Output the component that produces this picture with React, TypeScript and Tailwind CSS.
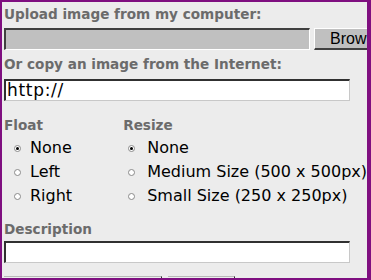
const heading = "h-[14px] font-['DejaVu_Sans',sans-serif] text-[13.6px] font-bold leading-none whitespace-nowrap text-[#6b6b6b]"
const label = "font-['DejaVu_Sans',sans-serif] text-[16px] leading-none whitespace-nowrap text-black"
const field = "border-t-2 border-l-2 border-b border-r border-t-[#303030] border-l-[#303030] border-b-[#c8c8c8] border-r-[#c8c8c8] bg-white"

function Radio({ checked }: { checked?: boolean }) {
  return (
    <span className="flex h-[7px] w-[7px] shrink-0 items-center justify-center rounded-full border border-[#8a8a8a] bg-white">
      {checked && <span className="h-[3px] w-[3px] rounded-full bg-black" />}
    </span>
  )
}

function Option({ text, checked, wide }: { text: string; checked?: boolean; wide?: boolean }) {
  return (
    <div className={wide ? "flex h-6 items-center gap-[12px] pl-[5px]" : "flex h-6 items-center gap-[9px] pl-[10px]"}>
      <Radio checked={checked} />
      <span className={label}>{text}</span>
    </div>
  )
}

export default function App() {
  return (
    <div className="h-[280px] w-[371px] overflow-hidden border-t-2 border-b-2 border-l-2 border-r-4 border-[#7f0f80] bg-[#ececec]">
      <div className="flex flex-col pl-[2px] pt-[6px]">
        <div className={heading}>Upload image from my computer:</div>
        <div className="mt-[6px] flex gap-1">
          <div className="h-[22px] w-[306px] shrink-0 border-t-2 border-l-2 border-b border-r border-t-[#404040] border-l-[#404040] border-b-white border-r-white bg-[#c0c0c0]" />
          <div className="flex h-[22px] w-[70px] shrink-0 items-center border-t border-l border-r-2 border-b-2 border-t-white border-l-white border-r-[#404040] border-b-[#404040] bg-[#c0c0c0] pl-[15px] font-['Liberation_Sans',sans-serif] text-[16px] text-black">
            Brow
          </div>
        </div>
        <div className={heading + " mt-[8px]"}>Or copy an image from the Internet:</div>
        <div className={field + " mt-[7px] flex h-[22px] w-[346px] items-center pl-[1px] font-['DejaVu_Sans',sans-serif] text-[17px] tracking-[0.7px] text-black"}>
          http://
        </div>
        <div className="mt-[18px] flex">
          <div className="flex w-[121px] flex-col">
            <div className={heading + " mb-[3px]"}>Float</div>
            <Option text="None" checked />
            <Option text="Left" />
            <Option text="Right" />
          </div>
          <div className="flex flex-col">
            <div className={heading + " mb-[3px]"}>Resize</div>
            <Option text="None" checked wide />
            <Option text="Medium Size (500 x 500px)" wide />
            <Option text="Small Size (250 x 250px)" wide />
          </div>
        </div>
        <div className={heading + " mt-[15px]"}>Description</div>
        <div className={field + " mt-[4px] h-[22px] w-[346px]"} />
        <div className="mt-[13px] flex gap-[6px]">
          <div className="h-3 w-[158px] border-t border-r border-t-[#b8b8b8] border-r-[#303030]" />
          <div className="h-3 w-[67px] border-t border-r border-t-[#b8b8b8] border-r-[#303030]" />
        </div>
      </div>
    </div>
  )
}
